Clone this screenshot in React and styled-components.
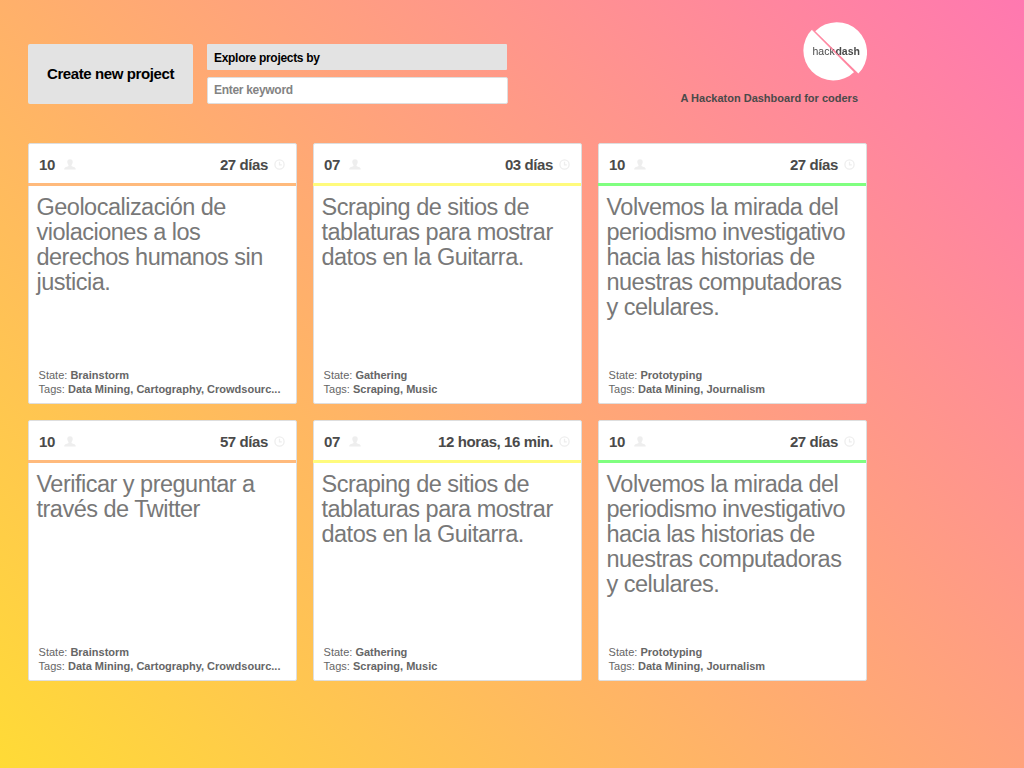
import React from "react";
import styled, { createGlobalStyle } from "styled-components";

const GlobalStyle = createGlobalStyle`
  * { box-sizing: border-box; }
  body {
    margin: 0;
    font-family: "Liberation Sans", Arial, sans-serif;
    -webkit-font-smoothing: antialiased;
  }
`;

const Page = styled.div`
  width: 1024px;
  height: 768px;
  overflow: hidden;
  padding: 22px 0 0 28px;
  background: linear-gradient(45deg, #ffdb36 0%, #ff78b0 100%);
`;

const Header = styled.header`
  display: flex;
  width: 839px;
  height: 121px;
`;

const CreateButton = styled.button`
  width: 165px;
  height: 60px;
  margin-top: 22px;
  padding: 0;
  border: 0;
  border-radius: 2px;
  background: #e3e3e3;
  color: #000;
  font: bold 15px/60px "Liberation Sans", Arial, sans-serif;
  letter-spacing: -0.4px;
`;

const Search = styled.div`
  display: flex;
  flex-direction: column;
  gap: 7px;
  margin: 22px 0 0 14px;
`;

const SearchLabel = styled.div`
  width: 300px;
  height: 26px;
  padding-left: 7px;
  border-radius: 1px;
  background: #e3e3e3;
  color: #000;
  font-size: 12px;
  font-weight: bold;
  line-height: 28px;
  letter-spacing: -0.3px;
`;

const SearchField = styled.input`
  width: 301px;
  height: 27px;
  padding: 0 6px 2px;
  border: 1px solid #dedede;
  border-radius: 2px;
  background: #fff;
  outline: 0;
  font: bold 12px "Liberation Sans", Arial, sans-serif;
  letter-spacing: -0.3px;
  &::placeholder { color: #838383; opacity: 1; }
`;

const Brand = styled.div`
  display: flex;
  flex-direction: column;
  align-items: flex-end;
  margin-left: auto;
`;

const Logo = styled.svg`
  display: block;
  width: 64px;
  height: 60px;
`;

const Tagline = styled.div`
  margin: 9px 9px 0 0;
  color: #4a4a4a;
  font-size: 11px;
  font-weight: bold;
  line-height: 14px;
  white-space: nowrap;
`;

const Grid = styled.main`
  display: grid;
  grid-template-columns: repeat(3, 269px);
  grid-auto-rows: 261px;
  gap: 16px;
`;

const Card = styled.article`
  display: flex;
  flex-direction: column;
  border: 1px solid #dedede;
  border-radius: 2px;
  background: #fff;
`;

const CardHeader = styled.div`
  display: flex;
  align-items: center;
  height: 42px;
  margin-left: -1px;
  padding: 2px 11px 0 11px;
  border-bottom: 3px solid ${(p) => p.$accent};
  color: #4a4a4a;
  font-size: 15px;
  font-weight: bold;
  letter-spacing: -0.4px;
`;

const PersonIcon = styled.svg`
  width: 12px;
  height: 11px;
  margin-left: 9.5px;
`;

const TimeLeft = styled.span`
  margin-left: auto;
`;

const ClockIcon = styled.svg`
  width: 11px;
  height: 11px;
  margin-left: 6px;
`;

const Title = styled.h2`
  margin: 9px 0 0 7.5px;
  color: #787878;
  font-size: 23.5px;
  font-weight: normal;
  line-height: 25px;
  letter-spacing: -0.51px;
  white-space: pre-line;
`;

const Meta = styled.div`
  margin: auto 10px 7px 9.6px;
  color: #666;
  font-size: 11px;
  line-height: 14px;
  white-space: nowrap;
`;

const orange = "#ffba7c";
const yellow = "#fffb7c";
const green = "#80ff80";

const geo = "Geolocalización de\nviolaciones a los\nderechos humanos sin\njusticia.";
const scraping = "Scraping de sitios de\ntablaturas para mostrar\ndatos en la Guitarra.";
const volvemos =
  "Volvemos la mirada del\nperiodismo investigativo\nhacia las historias de\nnuestras computadoras\ny celulares.";

const projects = [
  { people: "10", time: "27 días", accent: orange, title: geo, state: "Brainstorm", tags: "Data Mining, Cartography, Crowdsourc..." },
  { people: "07", time: "03 días", accent: yellow, title: scraping, state: "Gathering", tags: "Scraping, Music" },
  { people: "10", time: "27 días", accent: green, title: volvemos, state: "Prototyping", tags: "Data Mining, Journalism" },
  { people: "10", time: "57 días", accent: orange, title: "Verificar y preguntar a\ntravés de Twitter", state: "Brainstorm", tags: "Data Mining, Cartography, Crowdsourc..." },
  { people: "07", time: "12 horas, 16 min.", accent: yellow, title: scraping, state: "Gathering", tags: "Scraping, Music" },
  { people: "10", time: "27 días", accent: green, title: volvemos, state: "Prototyping", tags: "Data Mining, Journalism" },
];

function HackdashLogo() {
  return (
    <Logo viewBox="0 0 64 60">
      <defs>
        <mask id="slash" maskUnits="userSpaceOnUse" x="0" y="0" width="64" height="60">
          <rect width="64" height="60" fill="#fff" />
          <path d="M0 -1.8 L64 62.2" stroke="#000" strokeWidth="1.1" />
        </mask>
      </defs>
      <g mask="url(#slash)">
        <path d="M12.2 9.2 A29.3 29.3 0 0 1 55.4 51.6 Z" fill="#fff" />
        <path d="M9.3 7.3 A29.5 29.5 0 1 0 51.2 49.9 Z" fill="#fff" />
        <text x="9.5" y="33" fontSize="10.5" fill="#4a4a4a">hack</text>
        <text x="32.4" y="33" fontSize="10.5" fontWeight="bold" fill="#4a4a4a">dash</text>
      </g>
    </Logo>
  );
}

function ProjectCard({ people, time, accent, title, state, tags }) {
  return (
    <Card>
      <CardHeader $accent={accent}>
        <span>{people}</span>
        <PersonIcon viewBox="0 0 12 11">
          <path
            d="M6 .3C4.1.3 3.2 1.5 3.3 3.1c.1 1.3.6 2.3 1.2 2.9v1.1C4.1 8.1.2 7.6.2 10.6h11.6C11.8 7.6 7.9 8.1 7.5 7.1V6c.6-.6 1.1-1.6 1.2-2.9C8.8 1.5 7.9.3 6 .3Z"
            fill="#eeeeee"
          />
        </PersonIcon>
        <TimeLeft>{time}</TimeLeft>
        <ClockIcon viewBox="0 0 11 11" fill="none" stroke="#eeeeee" strokeWidth="1.3">
          <circle cx="5.5" cy="5.5" r="4.6" />
          <path d="M5.5 2.8V5.8H7.8" />
        </ClockIcon>
      </CardHeader>
      <Title>{title}</Title>
      <Meta>
        <div>State: <b>{state}</b></div>
        <div>Tags: <b>{tags}</b></div>
      </Meta>
    </Card>
  );
}

export default function App() {
  return (
    <>
      <GlobalStyle />
      <Page>
        <Header>
          <CreateButton>Create new project</CreateButton>
          <Search>
            <SearchLabel>Explore projects by</SearchLabel>
            <SearchField placeholder="Enter keyword" />
          </Search>
          <Brand>
            <HackdashLogo />
            <Tagline>A Hackaton Dashboard for coders</Tagline>
          </Brand>
        </Header>
        <Grid>
          {projects.map((project, i) => (
            <ProjectCard key={i} {...project} />
          ))}
        </Grid>
      </Page>
    </>
  );
}
